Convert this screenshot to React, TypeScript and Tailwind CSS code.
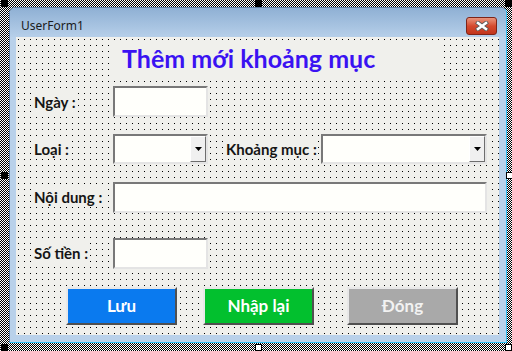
const font = "font-['Lato','Noto_Sans',sans-serif]";

function Handle({ className }: { className: string }) {
  return <div className={`absolute w-[7px] h-[7px] ${className}`} />;
}

function TextBox({ className }: { className: string }) {
  return (
    <div
      className={`h-[31px] bg-[#fffffb] border-2 border-t-[#787878] border-l-[#787878] border-r-[#e4e4e4] border-b-[#e4e4e4] ${className}`}
    />
  );
}

function ComboBox({ className }: { className: string }) {
  return (
    <div
      className={`flex bg-[#fffffb] border-2 border-t-[#787878] border-l-[#787878] border-r-[#e4e4e4] border-b-[#e4e4e4] ${className}`}
    >
      <div className="flex-1" />
      <div className="w-[16px] flex items-center justify-center bg-[#f0f0f0] border border-t-white border-l-white border-r-[#6e6e6e] border-b-[#6e6e6e]">
        <svg width="7" height="4" viewBox="0 0 7 4">
          <polygon points="0,0 7,0 3.5,4" fill="#000" />
        </svg>
      </div>
    </div>
  );
}

function Label({ text }: { text: string }) {
  return (
    <span className="inline-block whitespace-nowrap bg-[#f0f0ec] px-[1px] text-[15px] font-bold text-[#151515] leading-[20px]">
      {text}
    </span>
  );
}

function Button({ text, className }: { text: string; className: string }) {
  return (
    <div
      className={`h-[38px] w-[111px] flex items-center justify-center border-2 border-t-[#e8e8e8] border-l-[#e8e8e8] border-r-[#505050] border-b-[#505050] text-[17px] font-bold ${className}`}
    >
      {text}
    </div>
  );
}

export default function App() {
  return (
    <div
      className={`relative w-[512px] h-[351px] overflow-hidden bg-[repeating-conic-gradient(#000_0_25%,#fff_0_50%)] bg-[length:2px_2px] ${font}`}
    >
      {/* selection handles */}
      <Handle className="left-[1px] top-0 bg-black" />
      <Handle className="left-[255px] top-0 bg-black" />
      <Handle className="left-[505px] top-0 bg-black" />
      <Handle className="left-[1px] top-[172px] bg-black" />
      <Handle className="left-[506px] top-[172px] bg-white border border-black" />
      <Handle className="left-[1px] top-[344px] bg-black" />
      <Handle className="left-[255px] top-[344px] bg-white border border-black" />
      <Handle className="left-[505px] top-[344px] bg-white border border-black" />

      {/* window */}
      <div className="ml-[9px] mt-[7px] w-[498px] h-[336px] flex flex-col rounded-t-[6px] overflow-hidden border border-[#5f7d9f] border-r-[#34c0f2] border-b-[#34c0f2] bg-[#b9d1ea]">
        {/* title bar */}
        <div className="h-[29px] pt-[6px] flex items-center justify-between bg-gradient-to-b from-[#8fb0d4] to-[#b6cfe9] pl-[11px] pr-[9px]">
          <span className="font-['Noto_Sans',sans-serif] text-[12px] text-[#1b1b1b]">UserForm1</span>
          <div className="w-[31px] h-[18px] rounded-[3px] border border-[#7d2418] bg-gradient-to-b from-[#e8947c] via-[#d54a2e] to-[#c2351b] flex items-center justify-center">
            <svg width="14" height="10" viewBox="0 0 14 10">
              <path d="M3 2 L11 8 M11 2 L3 8" stroke="#5a5a5a" strokeWidth="4.2" strokeLinecap="square" />
              <path d="M3 2 L11 8 M11 2 L3 8" stroke="#fff" strokeWidth="2.6" strokeLinecap="square" />
            </svg>
          </div>
        </div>

        {/* client area */}
        <div className="mx-[6px] mb-[7px] mr-[7px] flex-1 flex flex-col bg-[#f0f0ec] bg-[conic-gradient(from_270deg_at_1px_1px,#000_25%,transparent_0)] bg-[length:6px_6px] bg-[position:2px_2px]">
          {/* heading */}
          <div className="ml-[97px] mt-[4px] w-[328px] h-[35px] bg-[#f0f0ec] pl-[9px] flex items-center text-[25px] font-bold text-[#3a12f2] leading-none">
            Thêm mới khoảng mục
          </div>

          <div className="mt-[10px] h-[31px] flex items-center">
            <div className="w-[97px] pl-[17px]">
              <Label text="Ngày :" />
            </div>
            <TextBox className="w-[95px]" />
          </div>

          <div className="mt-[17px] h-[30px] flex items-center">
            <div className="w-[97px] pl-[17px]">
              <Label text="Loại :" />
            </div>
            <ComboBox className="w-[95px] h-[30px]" />
            <div className="w-[113px] pl-[17px]">
              <Label text="Khoảng mục :" />
            </div>
            <ComboBox className="w-[166px] h-[30px]" />
          </div>

          <div className="mt-[18px] h-[30px] flex items-center">
            <div className="w-[97px] pl-[17px]">
              <Label text="Nội dung :" />
            </div>
            <TextBox className="w-[374px] h-[30px]" />
          </div>

          <div className="mt-[26px] h-[30px] flex items-center">
            <div className="w-[97px] pl-[17px]">
              <Label text="Số tiền :" />
            </div>
            <TextBox className="w-[95px] h-[30px]" />
          </div>

          <div className="mt-[19px] flex items-center pl-[50px]">
            <Button text="Lưu" className="w-[110px] bg-[#0a7aef] text-white" />
            <Button text="Nhập lại" className="ml-[26px] bg-[#02c02e] text-white" />
            <Button text="Đóng" className="ml-[33px] bg-[#a9a9a9] text-[#f2f2f2]" />
          </div>
        </div>
      </div>
    </div>
  );
}
